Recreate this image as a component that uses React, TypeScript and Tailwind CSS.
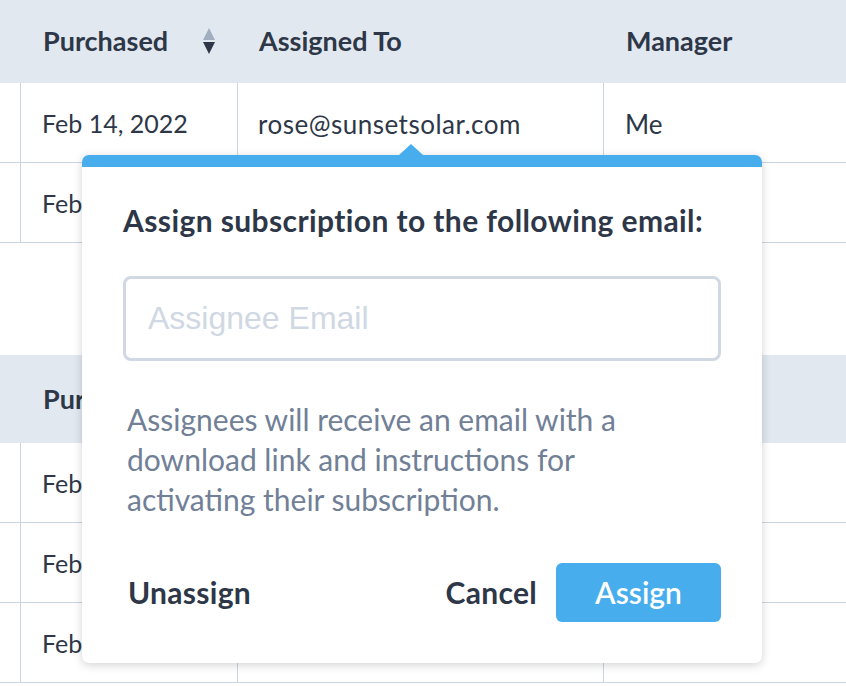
const headerCls =
  "flex items-center text-[27px] font-bold text-[#2d3748]";
const cellCls =
  "flex items-center pt-[3px] text-[#2d3748] border-b border-[#cbd5e1]";

function SortIcon() {
  return (
    <svg width="14" height="27" viewBox="0 0 14 27" className="ml-[34px]">
      <path d="M7 0 L13 12 H1 Z" fill="#a0aec0" />
      <path d="M1 14 H13 L7 26 Z" fill="#2d3748" />
    </svg>
  );
}

function Table({
  headerHeight,
  rows,
}: {
  headerHeight: string;
  rows: string[][];
}) {
  return (
    <div className="grid grid-cols-[21px_217px_366px_1fr]">
      <div className={`bg-[#e2e8f0] ${headerHeight}`} />
      <div className={`bg-[#e2e8f0] ${headerHeight} ${headerCls} pl-[22px]`}>
        Purchased
        <SortIcon />
      </div>
      <div className={`bg-[#e2e8f0] ${headerHeight} ${headerCls} pl-[21px]`}>
        Assigned To
      </div>
      <div className={`bg-[#e2e8f0] ${headerHeight} ${headerCls} pl-[22px]`}>
        Manager
      </div>
      {rows.map((r, i) => (
        <div key={i} className="contents">
          <div className={`${cellCls} h-[80px] border-r`} />
          <div className={`${cellCls} h-[80px] border-r pl-[21px] text-[25px]`}>{r[0]}</div>
          <div className={`${cellCls} h-[80px] border-r pl-[20px] text-[26px] tracking-[0.5px]`}>
            {r[1]}
          </div>
          <div className={`${cellCls} h-[80px] pl-[21px] text-[26px]`}>{r[2]}</div>
        </div>
      ))}
    </div>
  );
}

export default function App() {
  const top = [
    ["Feb 14, 2022", "rose@sunsetsolar.com", "Me"],
    ["Feb 14, 2022", "", ""],
  ];
  const bottom = [
    ["Feb 14, 2022", "", ""],
    ["Feb 14, 2022", "", ""],
    ["Feb 14, 2022", "", ""],
  ];

  return (
    <div
      className="relative w-[846px] h-[686px] overflow-hidden bg-white"
      style={{ fontFamily: "Lato, 'Open Sans', sans-serif" }}
    >
      <Table headerHeight="h-[83px]" rows={top} />
      <div className="h-[112px]" />
      <Table headerHeight="h-[88px]" rows={bottom} />

      {/* popover */}
      <div className="absolute left-[82px] top-[155px] w-[680px] h-[508px] rounded-[7px] bg-white border-t-[12px] border-[#47adec] shadow-[0_2px_10px_rgba(0,0,0,0.18)] flex flex-col px-[41px]">
        <div className="absolute -top-[23px] left-[317px] w-0 h-0 border-l-[12px] border-r-[12px] border-b-[11px] border-l-transparent border-r-transparent border-b-[#47adec]" />
        <h2 className="mt-[35px] text-[30px] leading-[36px] font-bold tracking-[0.4px] text-[#2d3748]">
          Assign subscription to the following email:
        </h2>
        <input
          placeholder="Assignee Email"
          className="mt-[38px] h-[85px] w-full rounded-[8px] border-[3px] border-[#cfd8e3] px-[22px] text-[32px] text-[#2d3748] placeholder:text-[#cfd8e3] outline-none"
          style={{ fontFamily: "'Liberation Sans', Arial, sans-serif" }}
        />
        <p className="mt-[38px] pl-[4px] text-[30px] leading-[40px] text-[#718096]">
          Assignees will receive an email with a<br />
          download link and instructions for
          <br />
          activating their subscription.
        </p>
        <div className="mt-[44px] flex items-center">
          <button className="pl-[5px] text-[30px] font-bold tracking-[0.3px] text-[#2d3748]">
            Unassign
          </button>
          <button className="ml-auto text-[30px] font-bold tracking-[0.3px] text-[#2d3748]">
            Cancel
          </button>
          <button className="ml-[19px] h-[59px] w-[165px] rounded-[6px] bg-[#47adec] text-[30px] font-semibold text-white">
            Assign
          </button>
        </div>
      </div>
    </div>
  );
}
